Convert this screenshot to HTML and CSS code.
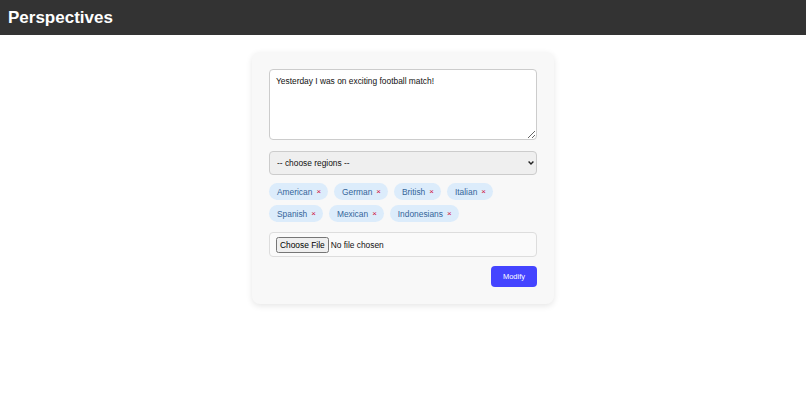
FILE: index.html
```html
<!DOCTYPE html>
<html lang="en">
<head>
    <meta charset="UTF-8">
    <meta name="viewport" content="width=device-width, initial-scale=1.0">
    <title>Perspectives</title>
    <link rel="stylesheet" href="styles.css">
</head>
<body>
    <div class="navbar">
        <h1>Perspectives</h1>
    </div>

    <div class="container">
        <form id="perspective-form">
            <textarea id="text" name="text">Yesterday I was on exciting football match!</textarea>

            <div class="select-wrap">
                <select id="regions" name="regions">
                    <option value="">-- choose regions --</option>
                </select>
                <svg class="chevron" width="6" height="4" viewBox="0 0 6 4"><path d="M0.6 0.6 L3 3 L5.4 0.6" fill="none" stroke="#222" stroke-width="1.4"/></svg>
            </div>

            <div class="tags">
                <span class="tag">American <span class="remove">×</span></span>
                <span class="tag">German <span class="remove">×</span></span>
                <span class="tag">British <span class="remove">×</span></span>
                <span class="tag">Italian <span class="remove">×</span></span>
                <span class="tag">Spanish <span class="remove">×</span></span>
                <span class="tag">Mexican <span class="remove">×</span></span>
                <span class="tag">Indonesians <span class="remove">×</span></span>
            </div>

            <div class="file-box">
                <input type="file" id="file" name="file">
            </div>

            <div class="actions">
                <button type="submit">Modify</button>
            </div>
        </form>
    </div>
</body>
</html>
```

FILE: styles.css
```css
body { font-family: "Liberation Sans", Arial, sans-serif; margin: 0; background-color: #fff; }
.navbar { background-color: #333; height: 35px; padding: 0 8px; display: flex; align-items: center; }
.navbar h1 { margin: 0; font-size: 17px; color: #fff; font-weight: bold; }
.container { width: 268px; margin: 17px auto; background-color: #f8f8f8; padding: 17px; border-radius: 8px; box-shadow: 0 2px 6px rgba(0,0,0,0.1); }
textarea { display: block; width: 100%; height: 71px; padding: 6px; border: 1px solid #ccc; border-radius: 4px; box-sizing: border-box; font-family: "Liberation Sans", Arial, sans-serif; font-size: 8.4px; color: #111; resize: vertical; margin: 0 0 11px; }
.select-wrap { position: relative; margin-bottom: 8px; }
select { display: block; width: 100%; height: 24px; padding: 0 7px; border: 1px solid #ccc; border-radius: 4px; box-sizing: border-box; background-color: #efefef; font-family: "Liberation Sans", Arial, sans-serif; font-size: 8.4px; color: #111; appearance: none; -webkit-appearance: none; }
.select-wrap .chevron { position: absolute; right: 3px; top: 10px; pointer-events: none; }
.tags { display: flex; flex-wrap: wrap; gap: 5px 6px; margin-bottom: 10px; }
.tag { display: inline-flex; align-items: center; height: 17px; padding: 0 7px 0 8px; background-color: #dcecfb; color: #34659a; border-radius: 9px; font-size: 8.4px; }
.tag .remove { color: #d0103a; font-size: 8px; margin-left: 4px; }
.file-box { border: 1px solid #ddd; border-radius: 4px; padding: 0 6px; height: 25px; box-sizing: border-box; display: flex; align-items: center; background-color: #fafafa; margin-bottom: 9px; }
.file-box input { font-family: "Liberation Sans", Arial, sans-serif; font-size: 8.4px; color: #111; }
.file-box input::file-selector-button { font-family: "Liberation Sans", Arial, sans-serif; font-size: 8.4px; padding: 1px 2px; margin-right: 2px; }
.actions { display: flex; justify-content: flex-end; }
button[type="submit"] { width: 46px; height: 21px; background-color: #4444ff; color: #fff; border: none; border-radius: 4px; font-size: 7.5px; font-family: "Liberation Sans", Arial, sans-serif; cursor: pointer; }
```
